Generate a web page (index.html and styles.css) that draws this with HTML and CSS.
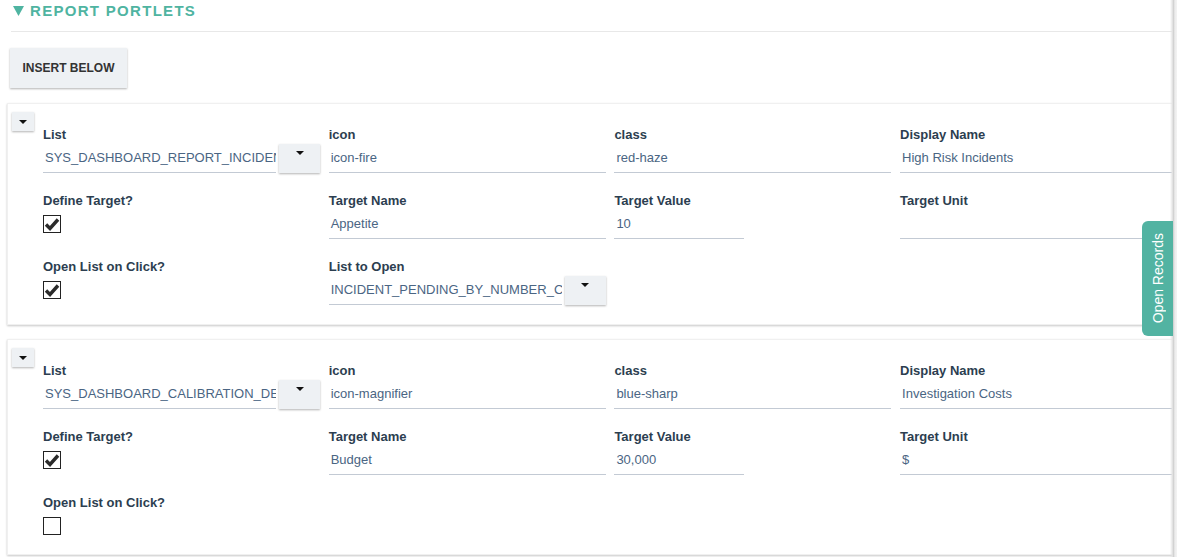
FILE: index.html
```html
<!DOCTYPE html>
<html lang="en">
<head>
	<meta charset="UTF-8">
	<title>Report Portlets</title>
	<link rel="stylesheet" href="styles.css">
</head>
<body>
	<div class="section-head">
		<svg class="arrow" width="11" height="10" viewBox="0 0 11 10"><path d="M0 0H11L5.5 10Z" fill="#4fb4a1"/></svg>
		REPORT PORTLETS
	</div>
	<div class="toolbar">
		<button class="btn">INSERT BELOW</button>
	</div>

	<div class="portlet">
		<div class="side"><span class="toggle"><i class="caret"></i></span></div>
		<div class="fields">
			<div class="field">
				<label>List</label>
				<div class="combo"><div class="inp">SYS_DASHBOARD_REPORT_INCIDENTS</div><span class="drop"><i class="caret"></i></span></div>
			</div>
			<div class="field">
				<label>icon</label>
				<div class="inp">icon-fire</div>
			</div>
			<div class="field">
				<label>class</label>
				<div class="inp">red-haze</div>
			</div>
			<div class="field">
				<label>Display Name</label>
				<div class="inp">High Risk Incidents</div>
			</div>

			<div class="field">
				<label>Define Target?</label>
				<div class="check-wrap"><span class="check on"><svg width="16" height="16" viewBox="0 0 16 16"><path d="M2 8.5L6 12.5L14 3.5" fill="none" stroke="#2b2b2b" stroke-width="3.4"/></svg></span></div>
			</div>
			<div class="field">
				<label>Target Name</label>
				<div class="inp">Appetite</div>
			</div>
			<div class="field">
				<label>Target Value</label>
				<div class="inp short">10</div>
			</div>
			<div class="field">
				<label>Target Unit</label>
				<div class="inp"></div>
			</div>

			<div class="field">
				<label>Open List on Click?</label>
				<div class="check-wrap"><span class="check on"><svg width="16" height="16" viewBox="0 0 16 16"><path d="M2 8.5L6 12.5L14 3.5" fill="none" stroke="#2b2b2b" stroke-width="3.4"/></svg></span></div>
			</div>
			<div class="field">
				<label>List to Open</label>
				<div class="combo"><div class="inp">INCIDENT_PENDING_BY_NUMBER_COUNT</div><span class="drop"><i class="caret"></i></span></div>
			</div>
		</div>
	</div>

	<div class="portlet">
		<div class="side"><span class="toggle"><i class="caret"></i></span></div>
		<div class="fields">
			<div class="field">
				<label>List</label>
				<div class="combo"><div class="inp">SYS_DASHBOARD_CALIBRATION_DETAILS</div><span class="drop"><i class="caret"></i></span></div>
			</div>
			<div class="field">
				<label>icon</label>
				<div class="inp">icon-magnifier</div>
			</div>
			<div class="field">
				<label>class</label>
				<div class="inp">blue-sharp</div>
			</div>
			<div class="field">
				<label>Display Name</label>
				<div class="inp">Investigation Costs</div>
			</div>

			<div class="field">
				<label>Define Target?</label>
				<div class="check-wrap"><span class="check on"><svg width="16" height="16" viewBox="0 0 16 16"><path d="M2 8.5L6 12.5L14 3.5" fill="none" stroke="#2b2b2b" stroke-width="3.4"/></svg></span></div>
			</div>
			<div class="field">
				<label>Target Name</label>
				<div class="inp">Budget</div>
			</div>
			<div class="field">
				<label>Target Value</label>
				<div class="inp short">30,000</div>
			</div>
			<div class="field">
				<label>Target Unit</label>
				<div class="inp">$</div>
			</div>

			<div class="field">
				<label>Open List on Click?</label>
				<div class="check-wrap"><span class="check"></span></div>
			</div>
		</div>
	</div>

	<div class="drawer-edge"></div>
	<div class="drawer-tab"><span>Open Records</span></div>
</body>
</html>
```

FILE: styles.css
```css
*{margin:0;padding:0;box-sizing:border-box;}
body{
	font-family:"Liberation Sans", Arial, sans-serif;
	font-size:13px;
	background:#fff;
	overflow:hidden;
}
.section-head{
	height:32px;
	margin-left:11px;
	padding-left:2px;
	line-height:22px;
	border-bottom:1px solid #e8e8e8;
	color:#4fb4a1;
	font-size:15px;
	font-weight:bold;
	letter-spacing:1.3px;
	display:flex;
	align-items:center;
	padding-bottom:9px;
	gap:6px;
}
.section-head .arrow{
	display:block;
}
.toolbar{
	padding:16px 0 15px 10px;
}
.btn{
	width:117px;
	height:40px;
	border:none;
	background:#eef1f4;
	box-shadow:0 1px 2px rgba(0,0,0,.3);
	font-family:"Liberation Sans", Arial, sans-serif;
	font-size:12px;
	font-weight:bold;
	color:#333;
}
.portlet{
	display:flex;
	margin:0 0 14px 7px;
	width:1170px;
	border:1px solid #f0f0f0;
	border-right:none;
	box-shadow:0 1px 2px rgba(0,0,0,.22);
	background:#fff;
	padding-bottom:19px;
}
.side{
	width:35px;
	padding:8px 0 0 4px;
	flex-shrink:0;
}
.toggle{
	display:flex;
	align-items:center;
	justify-content:center;
	width:22px;
	height:19px;
	background:#eef1f4;
	box-shadow:0 1px 2px rgba(0,0,0,.3);
}
.caret{
	display:block;
	width:0;
	height:0;
	border-left:4px solid transparent;
	border-right:4px solid transparent;
	border-top:4px solid #111;
}
.fields{
	display:grid;
	grid-template-columns:repeat(4, 277px);
	column-gap:8.7px;
	row-gap:19px;
	padding-top:22px;
	align-items:start;
}
.field label{
	display:block;
	height:18px;
	line-height:18px;
	font-weight:bold;
	color:#2c3e50;
}
.inp{
	height:29px;
	line-height:28px;
	padding-left:2px;
	border-bottom:1px solid #c3cad4;
	color:#4a6583;
	white-space:nowrap;
	overflow:hidden;
}
.inp.short{
	width:130px;
}
.combo{
	display:flex;
	gap:3px;
}
.combo .inp{
	flex:1;
}
.drop{
	display:flex;
	justify-content:center;
	padding-top:7px;
	width:41px;
	height:29px;
	flex-shrink:0;
	background:#eef1f4;
	box-shadow:0 1px 2px rgba(0,0,0,.3);
}
.check-wrap{
	padding-top:5px;
}
.check{
	display:block;
	width:18px;
	height:18px;
	border:1px solid #222;
	background:#fff;
}
.check svg{
	display:block;
	margin:0;
}
.drawer-edge{
	position:fixed;
	top:0;
	right:0;
	width:7px;
	height:100%;
	background:linear-gradient(to right, rgba(230,230,230,0), #e3e3e3 35%, #d2d2d2 50%, #ececec 70%, #f3f3f3);
}
.drawer-tab{
	position:fixed;
	top:221px;
	right:4px;
	width:31px;
	height:115px;
	background:#52b3a2;
	border-radius:6px 0 0 6px;
	display:flex;
	align-items:center;
	justify-content:center;
}
.drawer-tab span{
	writing-mode:vertical-rl;
	transform:rotate(180deg);
	color:#fff;
	font-size:14px;
}
```
